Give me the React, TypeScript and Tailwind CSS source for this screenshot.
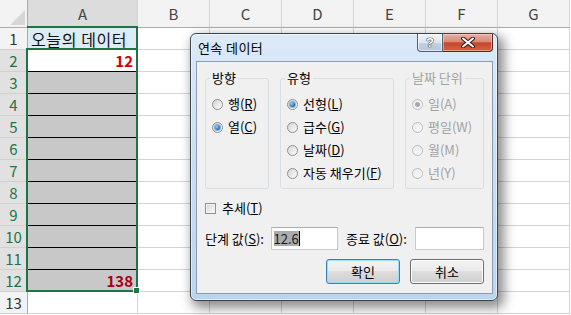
import { Fragment, ReactNode } from "react";

const COLS = ["B", "C", "D", "E", "F", "G"];

const Radio = ({ checked, disabled }: { checked?: boolean; disabled?: boolean }) => (
  <span
    className={
      "flex h-[11px] w-[11px] shrink-0 items-center justify-center rounded-full border " +
      (disabled
        ? "border-[#bcbcbc] bg-gradient-to-br from-[#ececec] to-[#fafafa]"
        : "border-[#8e8f8f] bg-gradient-to-br from-[#d4d4d4] to-[#fdfdfd]")
    }
  >
    {checked && (
      <span
        className={
          "h-[5px] w-[5px] rounded-full " +
          (disabled
            ? "bg-[#a8a8a8]"
            : "bg-[radial-gradient(circle_at_35%_35%,#8fd3f8,#1a5ba6_75%)] shadow-[0_0_0_1px_#7fb2e0]")
        }
      />
    )}
  </span>
);

const RadioRow = ({
  children,
  checked,
  disabled,
}: {
  children: ReactNode;
  checked?: boolean;
  disabled?: boolean;
}) => (
  <div className={"flex h-[20px] items-center gap-[5px] " + (disabled ? "text-[#a3a3a3]" : "text-black")}>
    <Radio checked={checked} disabled={disabled} />
    <span className="leading-[16px]">{children}</span>
  </div>
);

const Group = ({
  title,
  width,
  disabled,
  children,
}: {
  title: string;
  width: string;
  disabled?: boolean;
  children: ReactNode;
}) => (
  <fieldset className={"h-[119px] rounded-[3px] border border-[#d5dfe5] " + width}>
    <legend className={"ml-[4px] px-[2px] leading-[16px] " + (disabled ? "text-[#a3a3a3]" : "text-black")}>
      {title}
    </legend>
    <div className="flex flex-col gap-[3px] pl-[6px] pt-[8px]">{children}</div>
  </fieldset>
);

const Sheet = () => (
  <div className="grid grid-cols-[28px_110px_repeat(6,72px)] grid-rows-[28px_repeat(13,22px)] font-['Noto_Sans_CJK_KR','Noto_Sans',sans-serif] text-[15px]">
    <div className="relative border-r border-b border-[#ababab] bg-[#f3f3f3]">
      <svg className="absolute left-[10px] top-[10px]" width="15" height="15" viewBox="0 0 15 15">
        <polygon points="15,0 15,15 0,15" fill="#d6d6d6" />
      </svg>
    </div>
    <div className="flex items-center justify-center border-r border-b border-r-[#d4d4d4] border-b-[#ababab] bg-[#dcdcdc] leading-[20px] text-[#444]">
      A
    </div>
    {COLS.map((c) => (
      <div
        key={c}
        className="flex items-center justify-center border-r border-b border-r-[#d4d4d4] border-b-[#ababab] bg-[#f3f3f3] leading-[20px] text-[#444]"
      >
        {c}
      </div>
    ))}
    {Array.from({ length: 13 }).map((_, i) => {
      const r = i + 1;
      const sel = r >= 2 && r <= 12;
      let cellA = "bg-white border-b-[#d4d4d4]";
      if (r === 1) cellA = "bg-[#ddebf7] border-b-[#d4d4d4] justify-start pl-[3px]";
      else if (r === 2) cellA = "bg-white border-b-black justify-end pr-[4px]";
      else if (r <= 11) cellA = "bg-[#c8c8c8] border-b-black";
      else if (r === 12) cellA = "bg-[#c8c8c8] border-b-[#d4d4d4] justify-end pr-[4px]";
      return (
        <Fragment key={r}>
          <div
            className={
              "flex items-center justify-center border-r border-b border-r-[#ababab] border-b-[#cfcfcf] leading-[20px] " +
              (sel ? "bg-[#e1e1e1] text-[#217346]" : "bg-[#f3f3f3] text-[#333]")
            }
          >
            {r}
          </div>
          <div className={"flex items-center border-r border-b border-r-[#d4d4d4] leading-[20px] " + cellA}>
            {r === 1 && <span className="text-[16px] tracking-[0.6px] text-[#111]">오늘의 데이터</span>}
            {r === 2 && <span className="font-bold text-[#d00000]">12</span>}
            {r === 12 && <span className="font-bold text-[#a50010]">138</span>}
          </div>
          {COLS.map((c) => (
            <div key={c} className="border-r border-b border-[#d4d4d4]" />
          ))}
        </Fragment>
      );
    })}
  </div>
);

const Dialog = () => (
  <div className="absolute left-[190px] top-[33px] flex h-[268px] w-[308px] flex-col rounded-[6px] border border-[#3a434e] bg-gradient-to-b from-[#dceaf8] via-[#c9ddf2] to-[#bcd5ef] pb-[6px] pl-[5px] pr-[4px] font-['Noto_Sans_CJK_KR','Noto_Sans',sans-serif] text-[13px] shadow-[inset_0_0_0_1px_rgba(255,255,255,0.55),4px_5px_12px_2px_rgba(0,0,0,0.45)]">
    <div className="flex h-[27px] items-start justify-between">
      <span className="self-center pl-[2px] leading-[16px] tracking-[0.4px] text-black">연속 데이터</span>
      <div className="flex">
        <div className="flex h-[18px] w-[26px] items-center justify-center rounded-bl-[4px] border border-t-0 border-[#55606e] bg-[linear-gradient(#f1f5fa_0%,#dde6f0_50%,#c4d2e2_52%,#b5c6d9_100%)] shadow-[inset_0_0_0_1px_rgba(255,255,255,0.6)]">
          <span className="font-['Liberation_Sans',sans-serif] text-[13px] font-bold leading-[14px] text-white [text-shadow:0_0_1px_#2d3540,0_0_1px_#2d3540,0_0_1px_#2d3540]">
            ?
          </span>
        </div>
        <div className="flex h-[18px] w-[50px] items-center justify-center rounded-br-[4px] border border-t-0 border-l-0 border-[#5a2a22] bg-[linear-gradient(#eab0a2_0%,#d98a74_45%,#c7452e_52%,#d3623f_100%)] shadow-[inset_0_0_0_1px_rgba(255,220,210,0.5)]">
          <svg width="14" height="11" viewBox="0 0 14 11">
            <path d="M2 1.5 L12 9.5 M12 1.5 L2 9.5" stroke="#3b1a14" strokeWidth="4" strokeLinecap="round" />
            <path d="M2 1.5 L12 9.5 M12 1.5 L2 9.5" stroke="#ffffff" strokeWidth="2" strokeLinecap="round" />
          </svg>
        </div>
      </div>
    </div>
    <div className="flex flex-1 flex-col border border-[#8a9db2] bg-[#f0f0f0] px-[8px] pt-[8px] text-black">
      <div className="flex gap-[11px]">
        <Group title="방향" width="w-[64px]">
          <RadioRow>
            행(<u>R</u>)
          </RadioRow>
          <RadioRow checked>
            열(<u>C</u>)
          </RadioRow>
        </Group>
        <Group title="유형" width="w-[114px]">
          <RadioRow checked>
            선형(<u>L</u>)
          </RadioRow>
          <RadioRow>
            급수(<u>G</u>)
          </RadioRow>
          <RadioRow>
            날짜(<u>D</u>)
          </RadioRow>
          <RadioRow>
            자동 채우기(<u>F</u>)
          </RadioRow>
        </Group>
        <Group title="날짜 단위" width="w-[79px]" disabled>
          <RadioRow checked disabled>
            일(A)
          </RadioRow>
          <RadioRow disabled>평일(W)</RadioRow>
          <RadioRow disabled>월(M)</RadioRow>
          <RadioRow disabled>년(Y)</RadioRow>
        </Group>
      </div>

      <div className="mt-[11px] flex h-[16px] items-center gap-[6px]">
        <span className="h-[11px] w-[11px] border border-[#8f8f8f] bg-gradient-to-br from-[#d6d6d6] to-[#fbfbfb] shadow-[inset_0_0_0_1px_#f4f4f4]" />
        <span className="leading-[16px]">
          추세(<u>T</u>)
        </span>
      </div>

      <div className="mt-[11px] flex h-[23px] items-center">
        <span className="w-[66px] leading-[16px]">
          단계 값(<u>S</u>):
        </span>
        <div className="flex h-[23px] w-[68px] items-center border border-[#c5c9d0] border-t-[#abadb3] bg-white pl-[2px]">
          <span className="bg-[#acacac] leading-[15px] text-[#1a1a1a]">12.6</span>
          <span className="h-[15px] w-px bg-black" />
        </div>
        <span className="ml-[8px] w-[70px] leading-[16px]">
          종료 값(<u>O</u>):
        </span>
        <div className="h-[23px] w-[69px] border border-[#c5c9d0] border-t-[#abadb3] bg-white" />
      </div>

      <div className="mt-[9px] flex justify-end gap-[10px]">
        <button className="flex h-[25px] w-[74px] items-center justify-center rounded-[3px] border border-[#3c7fb1] bg-[linear-gradient(#f2f2f2_0%,#ebebeb_50%,#dddddd_50%,#cfcfcf_100%)] leading-[16px] shadow-[inset_0_0_0_1px_#9bdcf8]">
          확인
        </button>
        <button className="flex h-[25px] w-[74px] items-center justify-center rounded-[3px] border border-[#707070] bg-[linear-gradient(#f2f2f2_0%,#ebebeb_50%,#dddddd_50%,#cfcfcf_100%)] leading-[16px] shadow-[inset_0_0_0_1px_#fcfcfc]">
          취소
        </button>
      </div>
    </div>
  </div>
);

export default function App() {
  return (
    <div className="relative h-[315px] w-[571px] overflow-hidden bg-white">
      <Sheet />
      {/* column A header marker + A1 edge */}
      <div className="absolute left-[27px] top-[26px] h-[24px] w-[111px] border-t-2 border-r-2 border-[#217346]" />
      {/* selection A2:A12 */}
      <div className="absolute left-[26px] top-[48px] h-[244px] w-[112px] border-2 border-[#217346]" />
      <div className="absolute left-[133px] top-[287px] h-[7px] w-[7px] border border-white bg-[#217346]" />
      <Dialog />
    </div>
  );
}
